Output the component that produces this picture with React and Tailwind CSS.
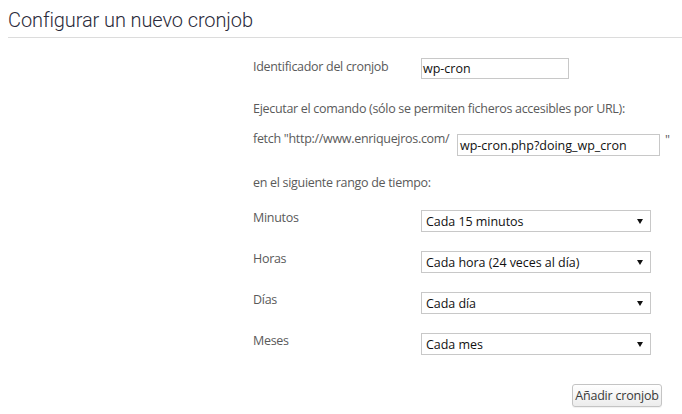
import React from "react";

function Arrow() {
  return (
    <svg width="6" height="5" viewBox="0 0 6 5" className="block shrink-0">
      <path d="M0 0 L6 0 L3 5 Z" fill="#111" />
    </svg>
  );
}

function Select({ value }) {
  return (
    <div className="mt-[1px] w-[230px] h-[22px] shrink-0 border border-[#c8c8c8] bg-white flex items-center justify-between pl-[4px] pr-[7px] text-[#111] text-[12.5px] tracking-[-0.05px] leading-[18px]">
      <span className="pt-[1px]">{value}</span>
      <Arrow />
    </div>
  );
}

function SelectRow({ label, value, className }) {
  return (
    <div className={"flex items-start " + className}>
      <span className="w-[168px] shrink-0 leading-[18px]">{label}</span>
      <Select value={value} />
    </div>
  );
}

export default function App() {
  return (
    <div className="w-[682px] h-[414px] bg-white font-['Open_Sans',sans-serif] text-[12.5px] tracking-[-0.3px] text-[#5a5a5a] pl-2 overflow-hidden">
      <div className="border-b border-[#dcdcdc] pt-[8px] pb-[5px]">
        <h1 className="font-['Roboto',sans-serif] font-light text-[20px] tracking-[-0.1px] leading-[24px] text-[#2a2a3a]">
          Configurar un nuevo cronjob
        </h1>
      </div>
      <div className="ml-[245px] w-[409px]">
        <div className="mt-[20px] flex items-start">
          <span className="w-[168px] shrink-0 leading-[18px]">Identificador del cronjob</span>
          <div className="w-[148px] h-[21px] shrink-0 border border-[#c8c8c8] flex items-center pl-[1px] pt-[1px] text-[#111] tracking-normal leading-[18px]">
            wp-cron
          </div>
        </div>
        <p className="mt-[21px] leading-[18px] whitespace-nowrap">
          Ejecutar el comando (sólo se permiten ficheros accesibles por URL):
        </p>
        <div className="mt-[12px] flex items-start">
          <span className="w-[204px] shrink-0 leading-[18px] whitespace-nowrap">fetch "http://www.enriquejros.com/</span>
          <div className="mt-[4px] w-[203px] h-[22px] shrink-0 border border-[#c8c8c8] flex items-center pl-[2px] pt-[1px] text-[#111] tracking-normal leading-[18px]">
            wp-cron.php?doing_wp_cron
          </div>
          <span className="ml-[5px] mt-[1px] shrink-0 leading-[18px]">"</span>
        </div>
        <p className="mt-[18px] leading-[18px]">en el siguiente rango de tiempo:</p>
        <SelectRow className="mt-[17px]" label="Minutos" value="Cada 15 minutos" />
        <SelectRow className="mt-[18px]" label="Horas" value="Cada hora (24 veces al día)" />
        <SelectRow className="mt-[18px]" label="Días" value="Cada día" />
        <SelectRow className="mt-[18px]" label="Meses" value="Cada mes" />
        <div className="mt-[29px] flex justify-end">
          <button className="w-[90px] h-[23px] rounded-[3px] border border-[#c4c4c4] bg-gradient-to-b from-white to-[#ececec] text-[#3a3a3a] text-[12.5px] tracking-[-0.2px] leading-[18px] whitespace-nowrap shadow-[0_1px_1px_rgba(0,0,0,0.06)]">
            Añadir cronjob
          </button>
        </div>
      </div>
    </div>
  );
}
